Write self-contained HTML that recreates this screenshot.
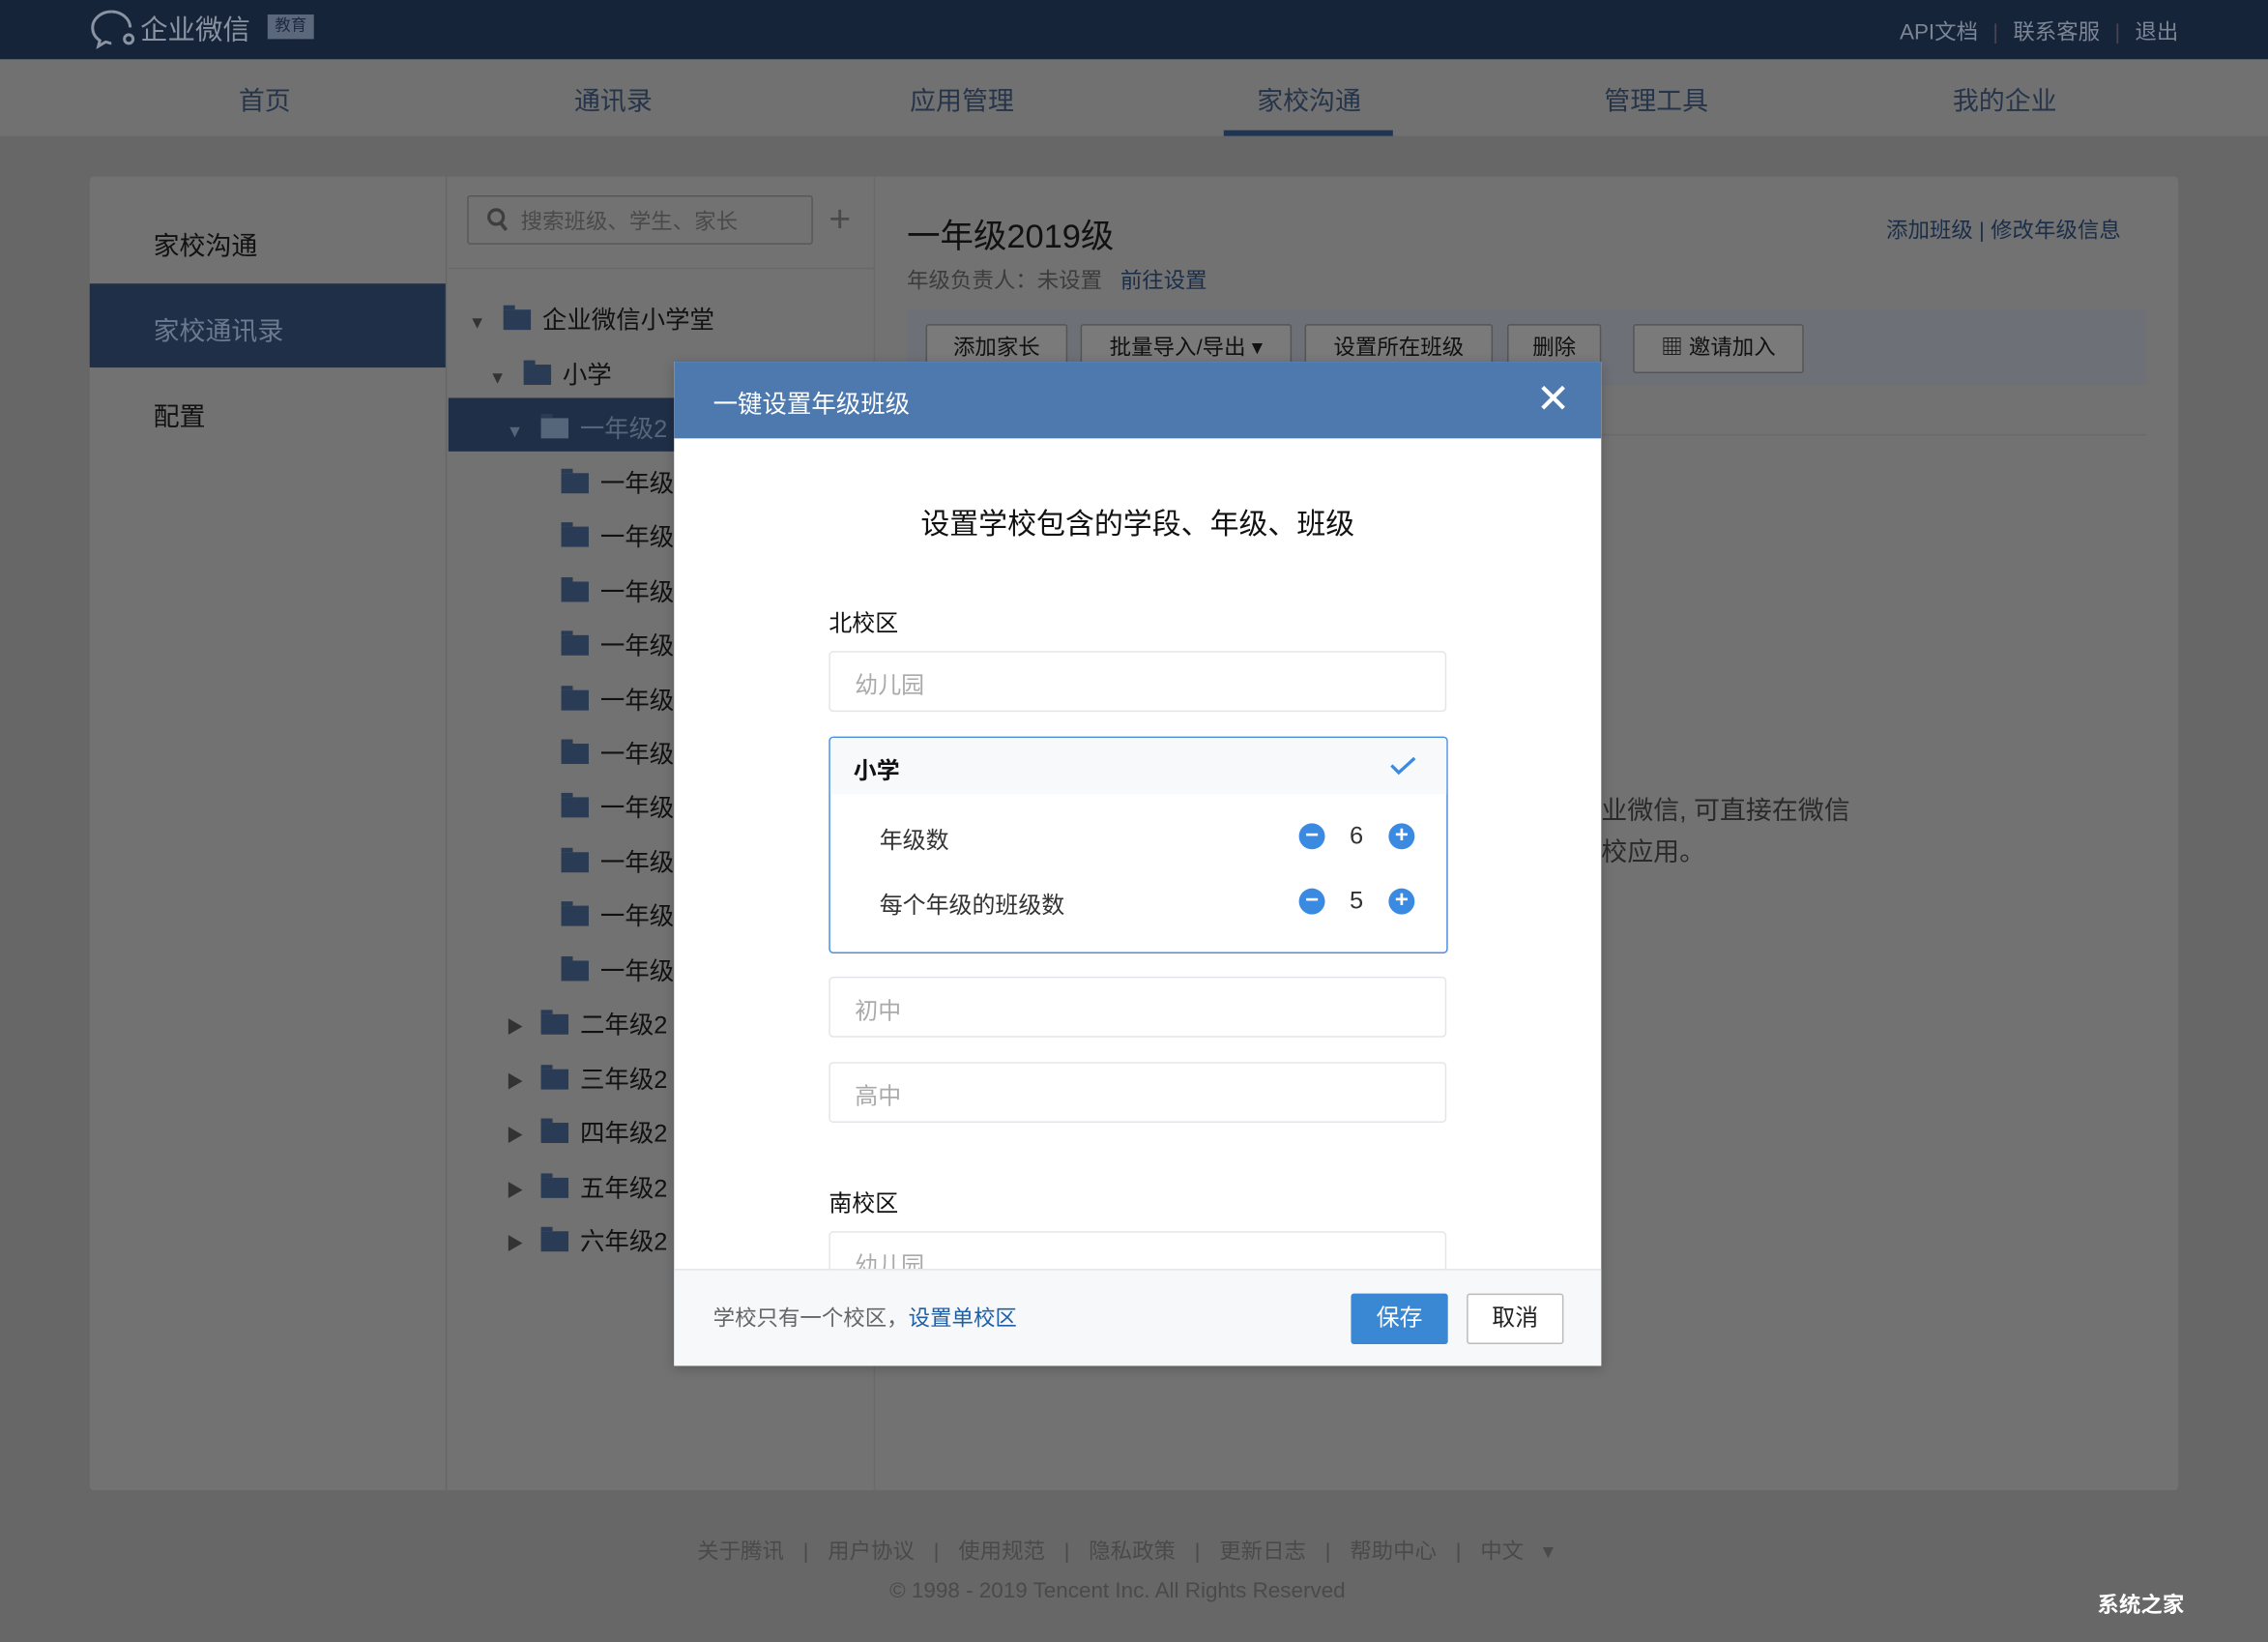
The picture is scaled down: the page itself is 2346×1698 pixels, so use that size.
<!DOCTYPE html>
<html><head><meta charset="utf-8"><style>
*{margin:0;padding:0;box-sizing:border-box}
html,body{width:2346px;height:1698px;overflow:hidden;background:#676767}
body{font-family:"Liberation Sans","Noto Sans CJK SC",sans-serif}
#w{width:1568px;height:1135px;transform:scale(1.4962);transform-origin:0 0;position:relative;background:#676767}
.a{position:absolute}
.top{left:0;top:0;width:1568px;height:41px;background:#16243a}
.nav{left:0;top:41px;width:1568px;height:54px;background:#717171;border-bottom:1px solid #666}
.nav span{position:absolute;top:15px;font-size:18px;color:#26344a;width:200px;text-align:center}
.card{left:62px;top:122px;width:1444px;height:908px;background:#727272;border-radius:3px}
.tree div{position:absolute;font-size:17px;color:#111;white-space:nowrap}
.fold{display:inline-block;width:19px;height:14px;background:#2a3c55;vertical-align:-1px;margin-right:8px;position:relative}
.fold:before{content:"";position:absolute;left:0;top:-3px;width:8px;height:3px;background:#2a3c55}
.tri{color:#333;font-size:12px;margin-right:12px}
.btn{position:absolute;top:224px;height:34px;border:1px solid #555;background:#7a7a7a;font-size:15px;color:#111;line-height:32px;text-align:center;border-radius:2px}
.dlg{left:466px;top:250px;width:641px;height:694px;background:#fff;overflow:hidden;box-shadow:0 2px 8px rgba(0,0,0,.2)}
.inp{position:absolute;left:107px;width:427px;height:42px;border:1px solid #e3e5ea;border-radius:3px;font-size:16px;color:#aaa;padding:9px 17px}
.circ{position:absolute;width:18px;height:18px;border-radius:50%;background:#3b8ae2;color:#fff;font-size:16px;line-height:17px;text-align:center;font-weight:bold}
.num{position:absolute;font-size:16px;color:#333;line-height:18px}
</style></head><body><div id="w">
<div class="a top">
 <svg class="a" style="left:62px;top:5px" width="34" height="30" viewBox="0 0 34 30"><path d="M15 3C8 3 2 8 2 14c0 4 2 7 5 9l-1 4 5-3c1 0 3 1 4 1" fill="none" stroke="#8a93a2" stroke-width="2"/><path d="M15 3c7 0 13 5 13 11" fill="none" stroke="#8a93a2" stroke-width="2"/><circle cx="27" cy="22" r="3" fill="none" stroke="#8a93a2" stroke-width="2"/></svg>
 <div class="a" style="left:97px;top:6px;font-size:19px;color:#8a93a2">企业微信</div>
 <div class="a" style="left:185px;top:10px;width:32px;height:17px;background:#5b677a;color:#1c2a40;font-size:11px;text-align:center;line-height:17px">教育</div>
 <div class="a" style="right:62px;top:11px;font-size:15px;color:#7b8594;white-space:nowrap;word-spacing:6px">API文档 <span style="color:#445">|</span> 联系客服 <span style="color:#445">|</span> 退出</div>
</div>
<div class="a nav">
 <span style="left:83px">首页</span><span style="left:324px">通讯录</span><span style="left:565px">应用管理</span><span style="left:805px">家校沟通</span><span style="left:1045px">管理工具</span><span style="left:1286px">我的企业</span>
 <div class="a" style="left:846px;top:49px;width:117px;height:4px;background:#1f3553"></div>
</div>
<div class="a card"></div>
<div class="a" style="left:308px;top:122px;width:1px;height:908px;background:#666"></div>
<div class="a" style="left:604px;top:122px;width:1px;height:908px;background:#6a6a6a"></div>
<div class="a" style="left:310px;top:185px;width:294px;height:1px;background:#686868"></div>
<div class="a" style="left:106px;top:156px;font-size:18px;color:#111">家校沟通</div>
<div class="a" style="left:62px;top:196px;width:246px;height:58px;background:#1f2f47"></div>
<div class="a" style="left:106px;top:215px;font-size:18px;color:#6b7a8f">家校通讯录</div>
<div class="a" style="left:106px;top:274px;font-size:18px;color:#111">配置</div>
<div class="a" style="left:323px;top:135px;width:239px;height:34px;border:1px solid #585858;border-radius:2px"></div>
<svg class="a" style="left:336px;top:143px" width="16" height="17"><circle cx="7" cy="7" r="5" fill="none" stroke="#3e3e3e" stroke-width="2.2"/><path d="M10 11l4 5" stroke="#3e3e3e" stroke-width="2.4"/></svg>
<div class="a" style="left:360px;top:142px;font-size:15px;color:#4a4a4a">搜索班级、学生、家长</div>
<div class="a" style="left:573px;top:136px;font-size:26px;color:#4a4a4a;font-weight:300">+</div>
<div class="a" style="left:310px;top:275px;width:160px;height:37px;background:#1f2f47"></div>
<div class="tree">
 <div style="left:324px;top:207px"><span class="tri">▼</span><span class="fold"></span>企业微信小学堂</div>
 <div style="left:338px;top:245px"><span class="tri">▼</span><span class="fold"></span>小学</div>
 <div style="left:350px;top:282px;color:#55657a"><span class="tri" style="color:#55657a">▼</span><span class="fold" style="background:#55657a"></span>一年级2</div>
 <div style="left:388px;top:320px"><span class="fold"></span>一年级</div>
 <div style="left:388px;top:357px"><span class="fold"></span>一年级</div>
 <div style="left:388px;top:395px"><span class="fold"></span>一年级</div>
 <div style="left:388px;top:432px"><span class="fold"></span>一年级</div>
 <div style="left:388px;top:470px"><span class="fold"></span>一年级</div>
 <div style="left:388px;top:507px"><span class="fold"></span>一年级</div>
 <div style="left:388px;top:544px"><span class="fold"></span>一年级</div>
 <div style="left:388px;top:582px"><span class="fold"></span>一年级</div>
 <div style="left:388px;top:619px"><span class="fold"></span>一年级</div>
 <div style="left:388px;top:657px"><span class="fold"></span>一年级</div>
 <div style="left:350px;top:694px"><span class="tri">▶</span><span class="fold"></span>二年级2</div>
 <div style="left:350px;top:732px"><span class="tri">▶</span><span class="fold"></span>三年级2</div>
 <div style="left:350px;top:769px"><span class="tri">▶</span><span class="fold"></span>四年级2</div>
 <div style="left:350px;top:807px"><span class="tri">▶</span><span class="fold"></span>五年级2</div>
 <div style="left:350px;top:844px"><span class="tri">▶</span><span class="fold"></span>六年级2</div>
</div>
<div class="a" style="left:627px;top:144px;font-size:23px;color:#111">一年级2019级</div>
<div class="a" style="left:627px;top:183px;font-size:15px;color:#3c3c3c">年级负责人：未设置 &nbsp; <span style="color:#1a2e4a">前往设置</span></div>
<div class="a" style="left:1304px;top:148px;font-size:15px;color:#1a2e4a">添加班级 | 修改年级信息</div>
<div class="a" style="left:627px;top:214px;width:857px;height:52px;background:#6d7076"></div>
<div class="a" style="left:627px;top:300px;width:857px;height:1px;background:#6a6a6a"></div>
<div class="btn" style="left:640px;width:98px">添加家长</div>
<div class="btn" style="left:747px;width:146px">批量导入/导出 ▾</div>
<div class="btn" style="left:902px;width:130px">设置所在班级</div>
<div class="btn" style="left:1042px;width:65px">删除</div>
<div class="btn" style="left:1129px;width:118px">▦ 邀请加入</div>
<div class="a" style="left:1107px;top:546px;font-size:18px;color:#2a2a2a;line-height:29px">业微信, 可直接在微信<br>校应用。</div>
<div class="a" style="left:482px;top:1061px;font-size:15px;color:#4a4a4a;white-space:nowrap;word-spacing:9px">关于腾讯 | 用户协议 | 使用规范 | 隐私政策 | 更新日志 | 帮助中心 | 中文 ▾</div>
<div class="a" style="left:615px;top:1091px;font-size:15px;color:#4a4a4a">© 1998 - 2019 Tencent Inc. All Rights Reserved</div>
<div class="a" style="left:1450px;top:1098px;font-size:15px;color:#fff;font-weight:bold">系统之家</div>

<div class="a dlg">
 <div class="a" style="left:0;top:0;width:641px;height:53px;background:#4e79ae"></div>
 <div class="a" style="left:27px;top:15px;font-size:17px;color:#fff">一键设置年级班级</div>
 <div class="a" style="left:596px;top:9px;font-size:28px;color:#fff">✕</div>
 <div class="a" style="left:0;top:96px;width:641px;text-align:center;font-size:20px;color:#111">设置学校包含的学段、年级、班级</div>
 <div class="a" style="left:107px;top:167px;font-size:16px;color:#111">北校区</div>
 <div class="inp" style="top:200px">幼儿园</div>
 <div class="a" style="left:107px;top:259px;width:428px;height:150px;border:1.5px solid #4a8ee0;border-radius:3px;overflow:hidden">
  <div class="a" style="left:0;top:0;width:428px;height:39px;background:#f8f9fb"></div>
  <div class="a" style="left:16px;top:9px;font-size:16px;font-weight:bold;color:#111">小学</div>
  <svg class="a" style="left:386px;top:12px" width="20" height="14"><path d="M2 7l5 5 11-10" fill="none" stroke="#3b8ae2" stroke-width="2.2"/></svg>
  <div class="a" style="left:34px;top:57px;font-size:16px;color:#333">年级数</div>
  <div class="a" style="left:34px;top:102px;font-size:16px;color:#333">每个年级的班级数</div>
  <div class="circ" style="left:324px;top:59px">−</div><div class="num" style="left:359px;top:59px;font-size:17px">6</div><div class="circ" style="left:386px;top:59px">+</div>
  <div class="circ" style="left:324px;top:104px">−</div><div class="num" style="left:359px;top:104px;font-size:17px">5</div><div class="circ" style="left:386px;top:104px">+</div>
 </div>
 <div class="inp" style="top:425px">初中</div>
 <div class="inp" style="top:484px">高中</div>
 <div class="a" style="left:107px;top:568px;font-size:16px;color:#111">南校区</div>
 <div class="inp" style="top:601px">幼儿园</div>
 <div class="a" style="left:0;top:627px;width:641px;height:67px;background:#f7f8fa;border-top:1px solid #e5e5e5"></div>
 <div class="a" style="left:27px;top:650px;font-size:15px;color:#666">学校只有一个校区，<span style="color:#1e5fa8">设置单校区</span></div>
 <div class="a" style="left:468px;top:644px;width:67px;height:35px;background:#3a87d3;border-radius:2px;color:#fff;font-size:16px;text-align:center;line-height:35px">保存</div>
 <div class="a" style="left:548px;top:644px;width:67px;height:35px;border:1px solid #bbb;background:#fff;border-radius:2px;color:#222;font-size:16px;text-align:center;line-height:33px">取消</div>
</div>
</div></body></html>
